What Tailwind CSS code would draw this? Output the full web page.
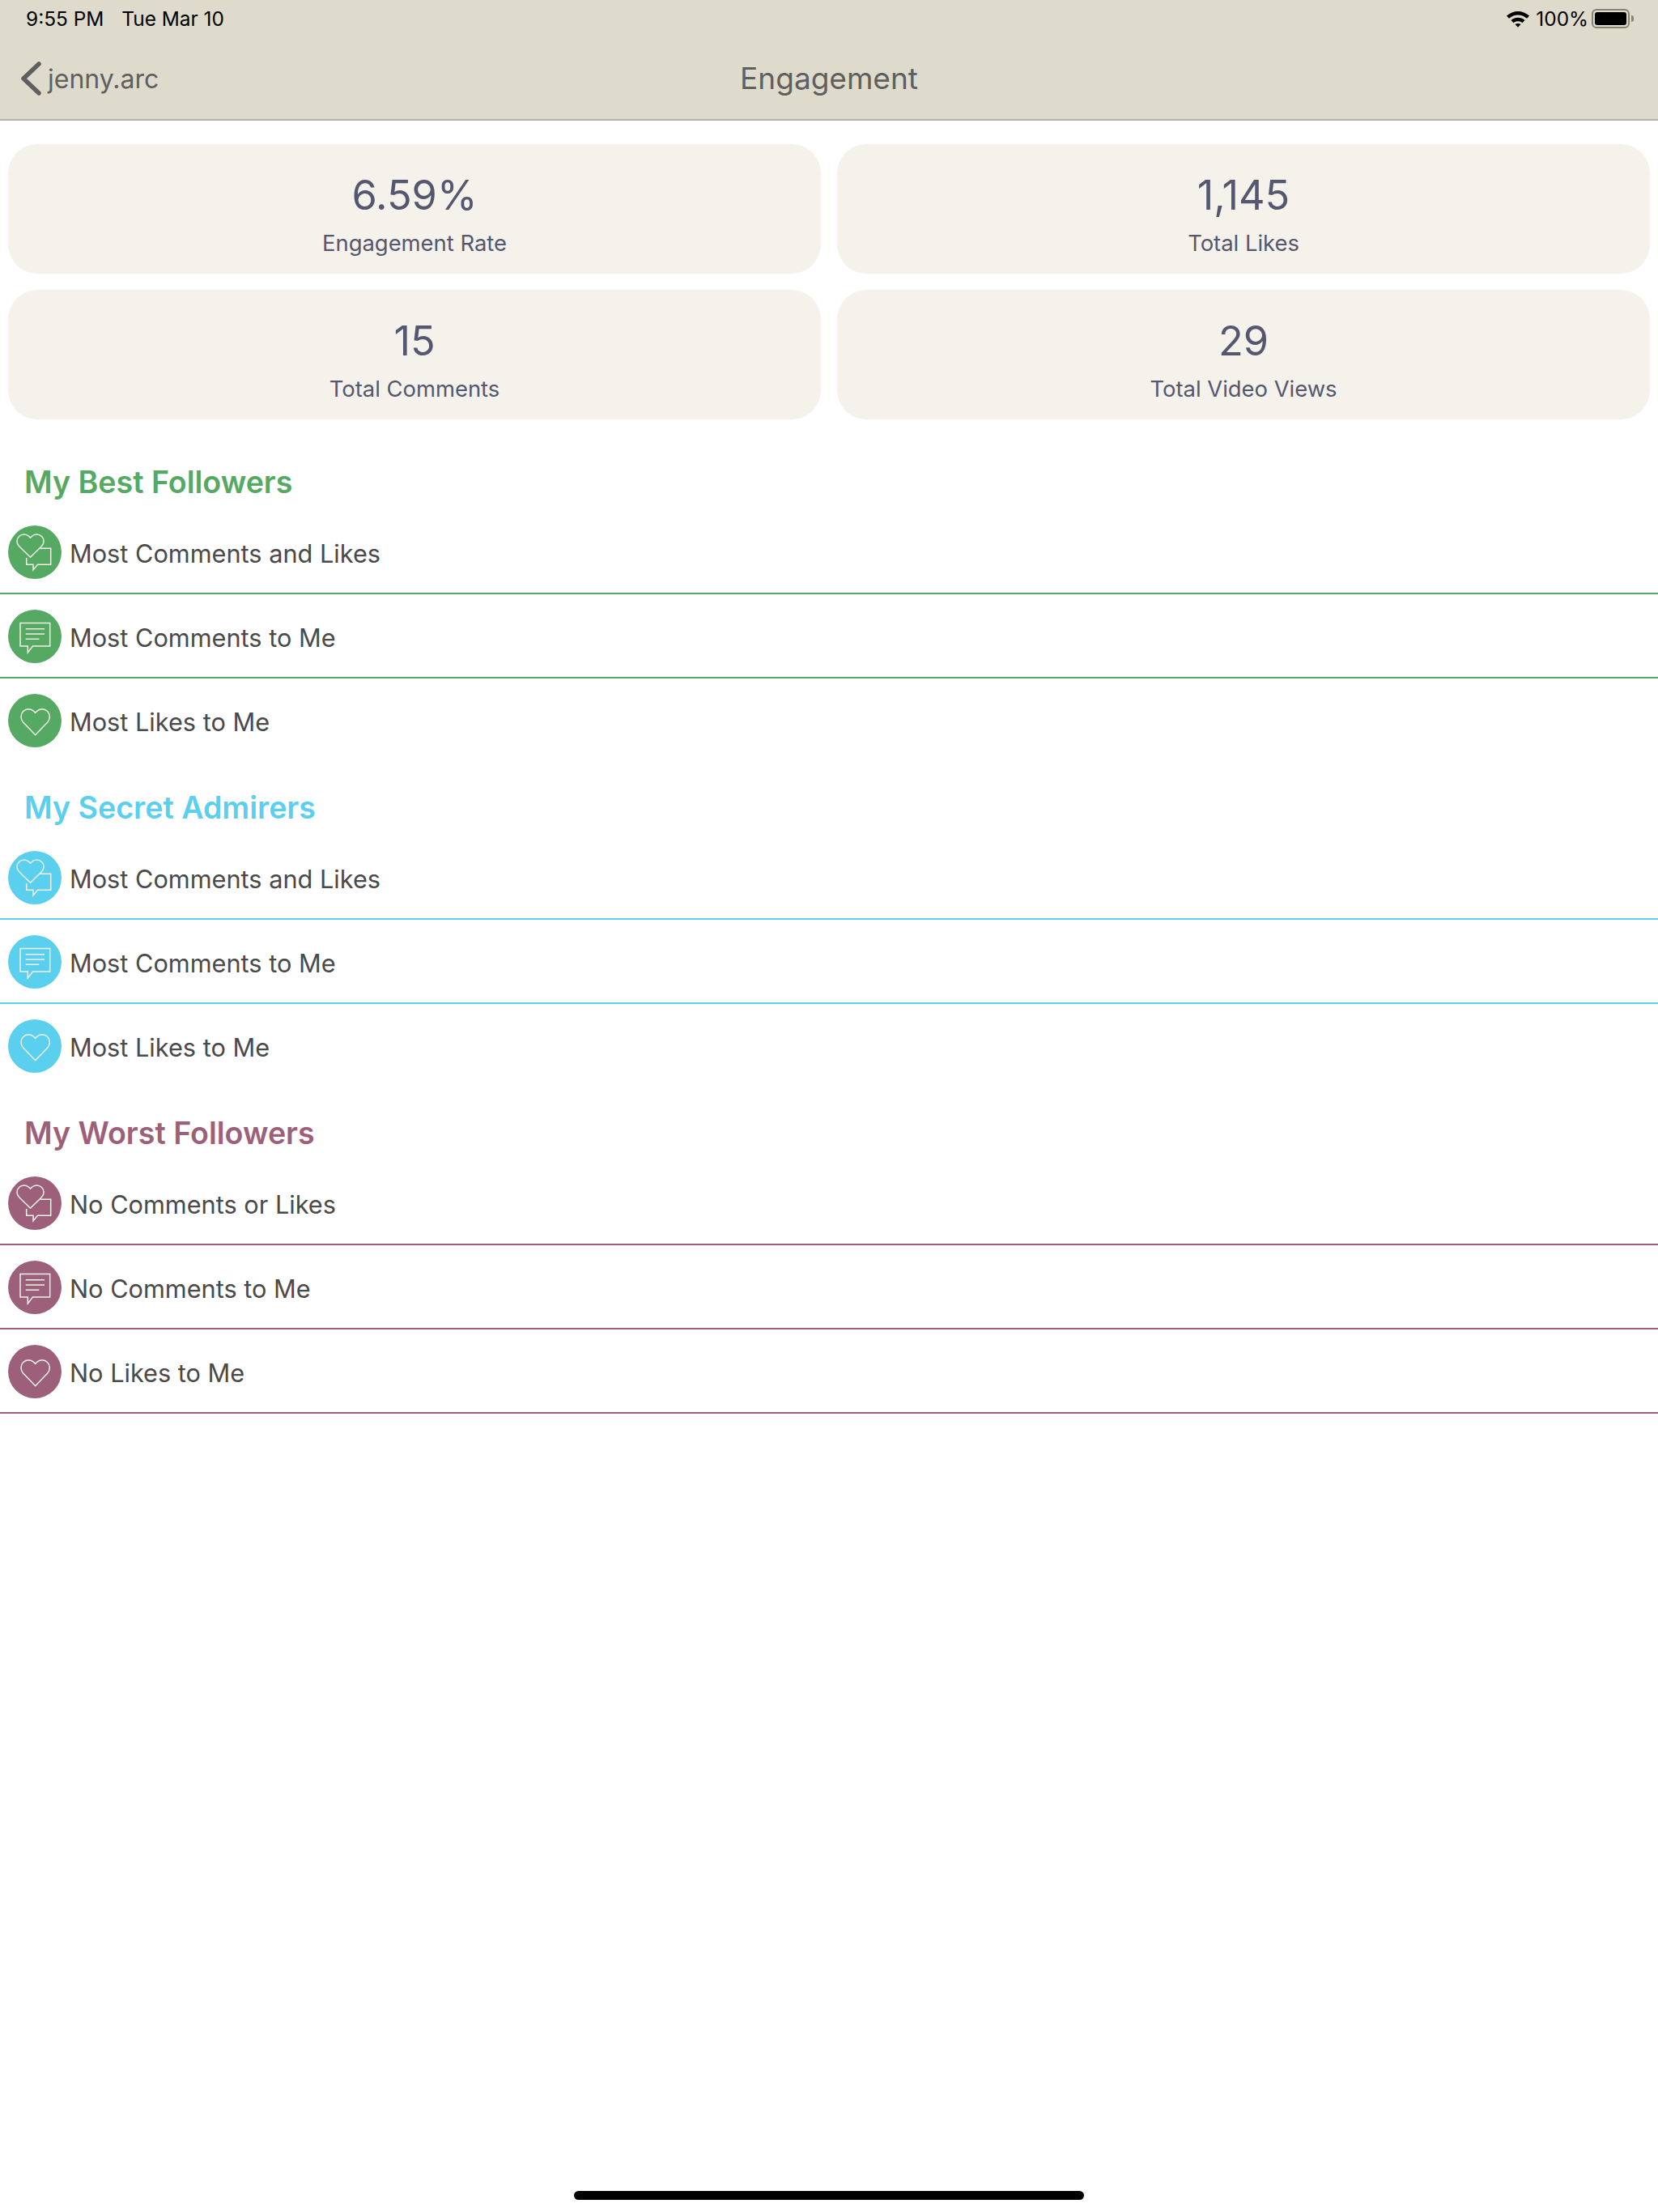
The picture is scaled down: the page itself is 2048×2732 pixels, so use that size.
<!DOCTYPE html>
<html><head><meta charset="utf-8"><script src="https://cdn.jsdelivr.net/npm/@tailwindcss/browser@4"></script></head>
<body class="bg-white font-['Inter',sans-serif] m-0">
<div class="relative w-[2048px] h-[2732px] overflow-hidden bg-white">
<header class="h-[149px] bg-[#dedbcc] border-b-2 border-[#b3b2ab] flex flex-col">
  <div class="h-[47px] pl-[32px] pr-[30px] flex items-center justify-between text-black text-[24.4px]">
    <div class="flex gap-[22px]"><span>9:55 PM</span><span>Tue Mar 10</span></div>
    <div class="flex items-center">
      <svg width="30" height="22" viewBox="0 0 30 22" class="mr-[7px]"><path d="M1 7.5C9 0 21 0 29 7.5L26 10.8C19.5 5 10.5 5 4 10.8Z M6.5 13C11.5 8.6 18.5 8.6 23.5 13L20.5 16.2C17.3 13.6 12.7 13.6 9.5 16.2Z M11.5 18C13.5 16.6 16.5 16.6 18.5 18L15 21.8Z" fill="#000"/></svg>
      <span>100%</span>
      <div class="ml-[4px] w-[47px] h-[24px] rounded-[6px] border-2 border-[#86836f] p-[2px]"><div class="w-full h-full rounded-[3px] bg-black"></div></div>
      <div class="ml-[2px] w-[3px] h-[8px] rounded-r-[3px] bg-[#86836f]"></div>
    </div>
  </div>
  <div class="relative flex-1 flex items-center justify-center text-[#5f5f5f] pb-[1px]">
    <div class="absolute left-[25px] top-[29px] flex items-center">
      <svg width="26" height="42" viewBox="0 0 26 42"><path d="M23 3L4 21L23 39" fill="none" stroke="#5f5f5f" stroke-width="5.5" stroke-linecap="round" stroke-linejoin="round"/></svg>
    </div>
    <span class="absolute left-[59px] top-[30px] text-[32px] leading-[42px]">jenny.arc</span>
    <span class="text-[37px] leading-[46px]">Engagement</span>
  </div>
</header>
<section class="grid grid-cols-2 gap-[20px] px-[10px] pt-[29px]">
  <div class="h-[160px] rounded-[36px] bg-[#f4f2eb] flex flex-col items-center pt-[31px] text-[#555770]"><div class="text-[50.5px] leading-[64px]">6.59%</div><div class="text-[27.4px] leading-[34px] mt-[10px]">Engagement Rate</div></div>
  <div class="h-[160px] rounded-[36px] bg-[#f4f2eb] flex flex-col items-center pt-[31px] text-[#555770]"><div class="text-[50.5px] leading-[64px]">1,145</div><div class="text-[27.4px] leading-[34px] mt-[10px]">Total Likes</div></div>
  <div class="h-[160px] rounded-[36px] bg-[#f4f2eb] flex flex-col items-center pt-[31px] text-[#555770]"><div class="text-[50.5px] leading-[64px]">15</div><div class="text-[27.4px] leading-[34px] mt-[10px]">Total Comments</div></div>
  <div class="h-[160px] rounded-[36px] bg-[#f4f2eb] flex flex-col items-center pt-[31px] text-[#555770]"><div class="text-[50.5px] leading-[64px]">29</div><div class="text-[27.4px] leading-[34px] mt-[10px]">Total Video Views</div></div>
</section>
<main class="mt-[22px] text-[#4a4a4a]">
  <!-- Best -->
  <section class="h-[402px]">
    <h2 class="h-[90px] pl-[30px] pt-[32px] text-[37.6px] leading-[48px] font-semibold text-[#55a962]">My Best Followers</h2>
    <div class="h-[104px] flex items-center pl-[10px] pt-[2px] gap-[10px] border-b-2 border-[#55a962] text-[30.7px]"><span class="w-[66px] h-[66px] shrink-0 rounded-full bg-[#55a962]"><svg width="66" height="66" viewBox="0 0 66 66" fill="none" stroke="#f0f0e6" stroke-width="1.5"><path transform="translate(8.55 6.35) scale(1.58 1.55)" vector-effect="non-scaling-stroke" d="M20.84 4.61a5.5 5.5 0 0 0-7.78 0L12 5.67l-1.06-1.06a5.5 5.5 0 0 0-7.78 7.78l1.06 1.06L12 21.23l7.78-7.78 1.06-1.06a5.5 5.5 0 0 0 0-7.78z"/><path d="M39.5 28.3H52.7V48.3H36.5L31 55V48.3H22.7V40"/></svg></span><span class="pt-[4px]">Most Comments and Likes</span></div>
    <div class="h-[104px] flex items-center pl-[10px] pt-[2px] gap-[10px] border-b-2 border-[#55a962] text-[30.7px]"><span class="w-[66px] h-[66px] shrink-0 rounded-full bg-[#55a962]"><svg width="66" height="66" viewBox="0 0 66 66" fill="none" stroke="#f0f0e6" stroke-width="1.5"><path d="M15 16.5H51.7V45H30.5L24.3 53V45H15Z"/><path d="M21.7 23.7H45M21.7 30H45M21.7 36.3H38.3"/></svg></span><span class="pt-[4px]">Most Comments to Me</span></div>
    <div class="h-[104px] flex items-center pl-[10px] pt-[2px] gap-[10px] border-b-2 border-transparent text-[30.7px]"><span class="w-[66px] h-[66px] shrink-0 rounded-full bg-[#55a962]"><svg width="66" height="66" viewBox="0 0 66 66" fill="none" stroke="#f0f0e6" stroke-width="1.5"><path transform="translate(13.38 13.43) scale(1.69 1.755)" vector-effect="non-scaling-stroke" d="M20.84 4.61a5.5 5.5 0 0 0-7.78 0L12 5.67l-1.06-1.06a5.5 5.5 0 0 0-7.78 7.78l1.06 1.06L12 21.23l7.78-7.78 1.06-1.06a5.5 5.5 0 0 0 0-7.78z"/></svg></span><span class="pt-[4px]">Most Likes to Me</span></div>
  </section>
  <!-- Secret -->
  <section class="h-[402px]">
    <h2 class="h-[90px] pl-[30px] pt-[32px] text-[37.6px] leading-[48px] font-semibold text-[#5bcfee]">My Secret Admirers</h2>
    <div class="h-[104px] flex items-center pl-[10px] pt-[2px] gap-[10px] border-b-2 border-[#5bcfee] text-[30.7px]"><span class="w-[66px] h-[66px] shrink-0 rounded-full bg-[#5bcfee]"><svg width="66" height="66" viewBox="0 0 66 66" fill="none" stroke="#f0f0e6" stroke-width="1.5"><path transform="translate(8.55 6.35) scale(1.58 1.55)" vector-effect="non-scaling-stroke" d="M20.84 4.61a5.5 5.5 0 0 0-7.78 0L12 5.67l-1.06-1.06a5.5 5.5 0 0 0-7.78 7.78l1.06 1.06L12 21.23l7.78-7.78 1.06-1.06a5.5 5.5 0 0 0 0-7.78z"/><path d="M39.5 28.3H52.7V48.3H36.5L31 55V48.3H22.7V40"/></svg></span><span class="pt-[4px]">Most Comments and Likes</span></div>
    <div class="h-[104px] flex items-center pl-[10px] pt-[2px] gap-[10px] border-b-2 border-[#5bcfee] text-[30.7px]"><span class="w-[66px] h-[66px] shrink-0 rounded-full bg-[#5bcfee]"><svg width="66" height="66" viewBox="0 0 66 66" fill="none" stroke="#f0f0e6" stroke-width="1.5"><path d="M15 16.5H51.7V45H30.5L24.3 53V45H15Z"/><path d="M21.7 23.7H45M21.7 30H45M21.7 36.3H38.3"/></svg></span><span class="pt-[4px]">Most Comments to Me</span></div>
    <div class="h-[104px] flex items-center pl-[10px] pt-[2px] gap-[10px] border-b-2 border-transparent text-[30.7px]"><span class="w-[66px] h-[66px] shrink-0 rounded-full bg-[#5bcfee]"><svg width="66" height="66" viewBox="0 0 66 66" fill="none" stroke="#f0f0e6" stroke-width="1.5"><path transform="translate(13.38 13.43) scale(1.69 1.755)" vector-effect="non-scaling-stroke" d="M20.84 4.61a5.5 5.5 0 0 0-7.78 0L12 5.67l-1.06-1.06a5.5 5.5 0 0 0-7.78 7.78l1.06 1.06L12 21.23l7.78-7.78 1.06-1.06a5.5 5.5 0 0 0 0-7.78z"/></svg></span><span class="pt-[4px]">Most Likes to Me</span></div>
  </section>
  <!-- Worst -->
  <section class="h-[402px]">
    <h2 class="h-[90px] pl-[30px] pt-[32px] text-[37.6px] leading-[48px] font-semibold text-[#9d607b]">My Worst Followers</h2>
    <div class="h-[104px] flex items-center pl-[10px] pt-[2px] gap-[10px] border-b-2 border-[#9d607b] text-[30.7px]"><span class="w-[66px] h-[66px] shrink-0 rounded-full bg-[#9d607b]"><svg width="66" height="66" viewBox="0 0 66 66" fill="none" stroke="#f0f0e6" stroke-width="1.5"><path transform="translate(8.55 6.35) scale(1.58 1.55)" vector-effect="non-scaling-stroke" d="M20.84 4.61a5.5 5.5 0 0 0-7.78 0L12 5.67l-1.06-1.06a5.5 5.5 0 0 0-7.78 7.78l1.06 1.06L12 21.23l7.78-7.78 1.06-1.06a5.5 5.5 0 0 0 0-7.78z"/><path d="M39.5 28.3H52.7V48.3H36.5L31 55V48.3H22.7V40"/></svg></span><span class="pt-[4px]">No Comments or Likes</span></div>
    <div class="h-[104px] flex items-center pl-[10px] pt-[2px] gap-[10px] border-b-2 border-[#9d607b] text-[30.7px]"><span class="w-[66px] h-[66px] shrink-0 rounded-full bg-[#9d607b]"><svg width="66" height="66" viewBox="0 0 66 66" fill="none" stroke="#f0f0e6" stroke-width="1.5"><path d="M15 16.5H51.7V45H30.5L24.3 53V45H15Z"/><path d="M21.7 23.7H45M21.7 30H45M21.7 36.3H38.3"/></svg></span><span class="pt-[4px]">No Comments to Me</span></div>
    <div class="h-[104px] flex items-center pl-[10px] pt-[2px] gap-[10px] border-b-2 border-[#9d607b] text-[30.7px]"><span class="w-[66px] h-[66px] shrink-0 rounded-full bg-[#9d607b]"><svg width="66" height="66" viewBox="0 0 66 66" fill="none" stroke="#f0f0e6" stroke-width="1.5"><path transform="translate(13.38 13.43) scale(1.69 1.755)" vector-effect="non-scaling-stroke" d="M20.84 4.61a5.5 5.5 0 0 0-7.78 0L12 5.67l-1.06-1.06a5.5 5.5 0 0 0-7.78 7.78l1.06 1.06L12 21.23l7.78-7.78 1.06-1.06a5.5 5.5 0 0 0 0-7.78z"/></svg></span><span class="pt-[4px]">No Likes to Me</span></div>
  </section>
</main>
<div class="absolute bottom-[15px] left-[709px] w-[630px] h-[11px] rounded-full bg-black"></div>
</div>
</body></html>
